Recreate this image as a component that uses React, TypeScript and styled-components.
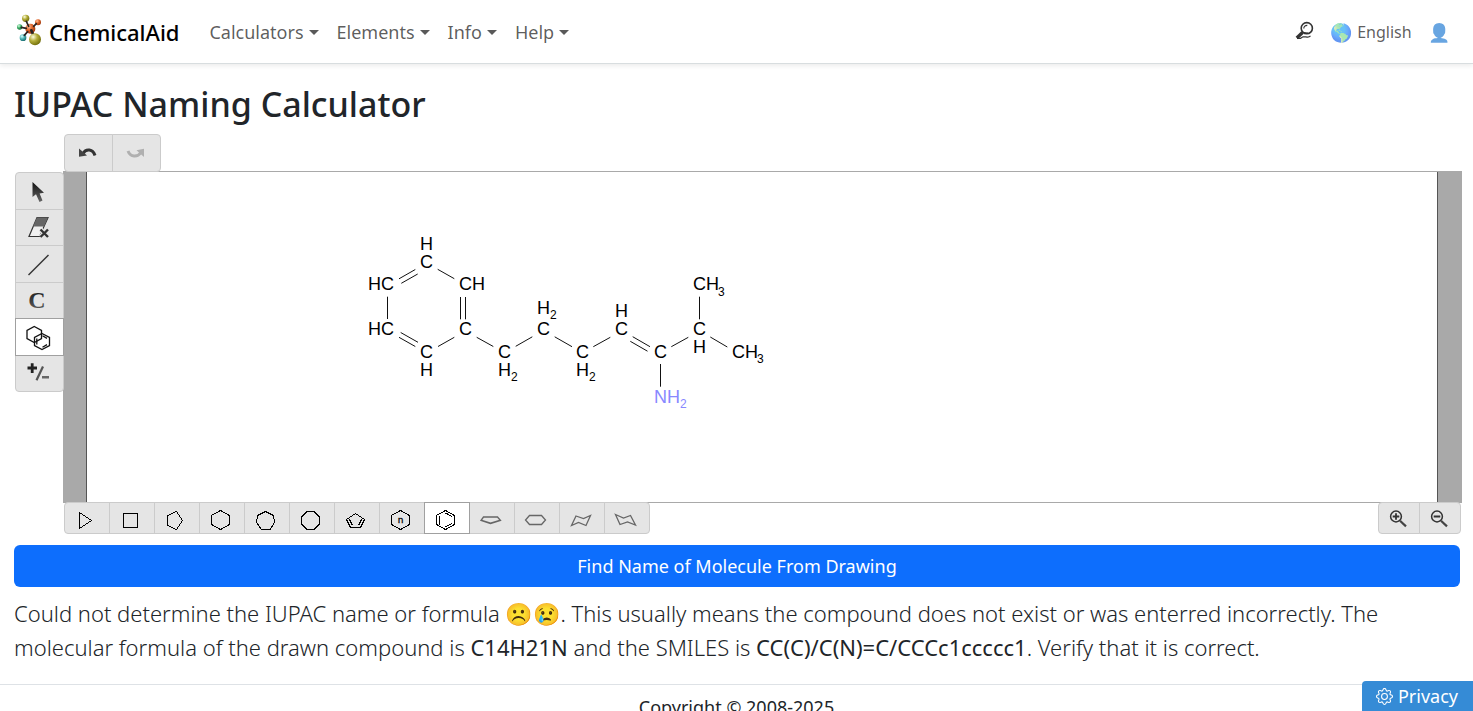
import React from "react";
import styled, { createGlobalStyle } from "styled-components";
import { BsGear } from "react-icons/bs";

const GlobalStyle = createGlobalStyle`
  *, *::before, *::after { box-sizing: border-box; }
  html { scrollbar-width: none; }
  body {
    margin: 0;
    background: #fff;
    color: #212529;
    font-family: "Noto Sans", "Noto Color Emoji", sans-serif;
    font-size: 18px;
    line-height: 27px;
  }
`;

const NavBar = styled.nav`
  display: flex;
  align-items: center;
  min-height: 64px;
  padding: 0 22px 0 16px;
  border-bottom: 1px solid #d8dddf;
  box-shadow: 0 2px 5px rgba(0, 0, 0, 0.08);
`;

const Brand = styled.a`
  display: flex;
  align-items: center;
  gap: 6px;
  margin-right: 21px;
  padding-bottom: 4px;
  color: #000;
  font-size: 22px;
  font-weight: 500;
  text-decoration: none;

  span { padding-top: 6px; }
`;

const NavList = styled.ul`
  display: flex;
  flex: 1;
  margin: 0;
  padding: 2px 0 0;
  list-style: none;
`;

const NavLink = styled.a`
  display: flex;
  align-items: center;
  gap: 5px;
  padding: 0 9px;
  color: rgba(0, 0, 0, 0.65);
  text-decoration: none;

  &::after {
    content: "";
    border-top: 5px solid;
    border-right: 5px solid transparent;
    border-left: 5px solid transparent;
  }
`;

const NavTools = styled.div`
  display: flex;
  align-items: center;
  gap: 17px;
  padding-top: 2px;
`;

const ToolLink = styled.a`
  display: flex;
  align-items: center;
  gap: 4px;
  color: rgba(0, 0, 0, 0.65);
  font-size: 16px;
  text-decoration: none;

  svg { margin-bottom: 4px; }
`;

const Emoji = styled.span`
  font-size: 18px;
`;

const Main = styled.main`
  padding: 0 13px 0 14px;
`;

const Title = styled.h1`
  margin: 0;
  padding: 18px 0 8px;
  font-size: 34px;
  font-weight: 500;
  line-height: 44px;
`;

const Editor = styled.section`
  display: grid;
  grid-template-columns: 49px minmax(0, 1fr);
  grid-template-rows: 37px 332px 31px;
  margin-right: -2px;
`;

const TopBar = styled.div`
  grid-column: 2;
  display: flex;
  height: 38px;
  padding-left: 1px;
`;

const SideBar = styled.div`
  display: grid;
  grid-template-rows: 37px 36px 37px 36px 37px 37px;
  align-self: start;
  width: 49px;
  margin: 1px 0 0 1px;
`;

const BottomBar = styled.div`
  grid-column: 2;
  display: flex;
  justify-content: space-between;
  margin-top: -1px;
  padding: 0 1px;
  z-index: 1;
`;

const ButtonGroup = styled.div`
  display: flex;

  > button + button { margin-left: -1px; }
`;

type ToolProps = { $width?: number; $on?: boolean; $side?: boolean };

const ToolButton = styled.button<ToolProps>`
  display: block;
  width: ${(p) => p.$width ?? 46}px;
  margin: ${(p) => (p.$side ? "0 0 -1px" : "0")};
  padding: 0;
  overflow: hidden;
  border: 1px solid ${(p) => (p.$on ? "#a0a0a0" : "#cbcbcb")};
  background: ${(p) => (p.$on ? "#fff" : "#e5e5e5")};
  z-index: ${(p) => (p.$on ? 1 : 0)};

  &:first-child { border-radius: ${(p) => (p.$side ? "4px 4px 0 0" : "4px 0 0 4px")}; }
  &:last-child {
    margin-bottom: 0;
    border-radius: ${(p) => (p.$side ? "0 0 4px 4px" : "0 4px 4px 0")};
  }
  svg { display: block; }
`;

const Canvas = styled.div`
  display: flex;
  padding: 0 24px 0 23px;
  border: solid #a9a9a9;
  border-width: 1px 0;
  background: #a9a9a9;
`;

const Paper = styled.div`
  flex: 1;
  min-width: 0;
  overflow: hidden;
  border: solid #555;
  border-width: 0 1px;
  background: #fff;

  svg { display: block; }
  text { font: 18px "Liberation Sans", sans-serif; }
  .sub { font-size: 12px; }
`;

const FindButton = styled.button`
  display: block;
  width: 100%;
  height: 42px;
  margin-top: 11px;
  border: 0;
  border-radius: 6px;
  background: #0d6efd;
  color: #fff;
  font: 18px/27px "Noto Sans", sans-serif;
`;

const Result = styled.p`
  margin: 9px 0 20px;
  font-size: 22px;
  font-weight: 300;
  line-height: 34px;

  strong { font-weight: 400; }
`;

const Faces = styled.span`
  font-family: "Noto Color Emoji", sans-serif;
  line-height: 1;
`;

const Footer = styled.footer`
  padding: 9px 0;
  border-top: 1px solid #dee2e6;
  text-align: center;
`;

const PrivacyButton = styled.button`
  position: fixed;
  right: 0;
  bottom: 0;
  display: flex;
  align-items: center;
  gap: 5px;
  height: 30px;
  padding: 0 15px 0 14px;
  border: 0;
  border-radius: 4px 0 0 0;
  background: #358bd6;
  color: #fff;
  font: 18px/27px "Noto Sans", sans-serif;
`;

const Logo = () => (
  <svg width="27" height="32" viewBox="48 42 81 96" aria-hidden="true">
    <defs>
      <radialGradient id="lime" cx="35%" cy="30%" r="75%">
        <stop offset="0" stopColor="#fdfde0" />
        <stop offset="0.45" stopColor="#b4ae3a" />
        <stop offset="1" stopColor="#6d6a08" />
      </radialGradient>
      <radialGradient id="orange" cx="35%" cy="30%" r="75%">
        <stop offset="0" stopColor="#ffc09a" />
        <stop offset="0.45" stopColor="#e0672c" />
        <stop offset="1" stopColor="#9a3407" />
      </radialGradient>
      <radialGradient id="green" cx="35%" cy="30%" r="75%">
        <stop offset="0" stopColor="#d4ffe0" />
        <stop offset="0.5" stopColor="#3fae68" />
        <stop offset="1" stopColor="#146b35" />
      </radialGradient>
      <radialGradient id="teal" cx="35%" cy="30%" r="75%">
        <stop offset="0" stopColor="#d8ffff" />
        <stop offset="0.5" stopColor="#4cb3b3" />
        <stop offset="1" stopColor="#14686c" />
      </radialGradient>
    </defs>
    <circle cx="59" cy="81" r="8" fill="url(#green)" />
    <circle cx="114" cy="67" r="9" fill="url(#orange)" />
    <circle cx="69" cy="113" r="10" fill="url(#teal)" />
    <circle cx="77" cy="55" r="11" fill="url(#lime)" />
    <circle cx="91" cy="86" r="15" fill="url(#orange)" />
    <g stroke="#2b2422" strokeWidth="5" strokeLinecap="round">
      <path d="M79 64 86 79M64 82 79 85M109 71 101 79M73 106 83 95" />
      <path d="M94 91 99 103" strokeWidth="8" />
    </g>
    <circle cx="105" cy="118" r="18" fill="url(#lime)" />
  </svg>
);

const SearchIcon = () => (
  <svg width="19" height="20" viewBox="0 0 19 20" fill="none" stroke="#333" aria-hidden="true">
    <circle cx="11.8" cy="7.2" r="5.6" strokeWidth="1.6" />
    <path d="M8.8 7.5c0-2 1.5-3.3 3.5-3.2" strokeWidth="1.2" />
    <path d="m7.5 11.5-5.7 5.4" strokeWidth="3.4" />
    <path d="M2 17.3h3.5l2.5-1.5h3q3 .8 4.5-1M7.5 11.5l5.5.5" strokeWidth="1.2" />
  </svg>
);

const HEXAGON = "M20.5 7.5 29.5 12.5V21.5L20.5 26.5 11.5 21.5V12.5Z";

const rings: { name: string; path: string; soft?: boolean; label?: string; on?: boolean }[] = [
  { name: "Cyclopropane", path: "M14.5 9.5V25.5L26.5 17.5Z" },
  { name: "Cyclobutane", path: "M13.5 10.5H27.5V24.5H13.5Z" },
  { name: "Cyclopentane", path: "M12.5 12.5V22.5L21.5 26.5 27.5 17.5 21.5 8.5Z" },
  { name: "Cyclohexane", path: HEXAGON },
  { name: "Cycloheptane", path: "M20.5 8.5 28.5 12.5 29.5 19.5 25 26.5H16.5L11.5 19.5 12.5 12.5Z" },
  { name: "Cyclooctane", path: "M17 8.5H24L29.5 14V21L24 26.5H17L11.5 21V14Z" },
  { name: "Cyclopentadiene", path: "M20.5 10.5 29.5 16.5 25.5 24.5H15.5L11.5 16.5ZM14.5 16.5 17.5 22.5M26.5 16.5 23.5 22.5" },
  { name: "Ring of n atoms", path: HEXAGON, label: "n" },
  { name: "Benzene", path: HEXAGON + "M14.5 13V21.5M20.5 10 27 13.5M27 20.5 20.5 24", on: true },
  { name: "Cyclopentane envelope", path: "M13.5 14H27.5L30.5 17.5 20.5 20.5 11 17.5ZM11 17 20.5 20 30.5 17", soft: true },
  { name: "Flat cyclohexane", path: "M14.5 12.5H26.5L30.5 17 26.5 21.5H14.5L10.5 17Z", soft: true },
  { name: "Chair left", path: "M16 13 23.5 15.5 30.5 12.5 26 22.5 18.5 19.5 11.5 22.5Z", soft: true },
  { name: "Chair right", path: "M10.5 11.5 18.5 15 25.5 12.5 30.5 22 22.5 19 15 21.5Z", soft: true },
];

const RingIcon = ({ path, soft, label }: { path: string; soft?: boolean; label?: string }) => (
  <svg width="44" height="30" fill="none" aria-hidden="true">
    <path d={path} stroke={soft ? "#666" : "#000"} strokeWidth={soft ? 1.3 : 1} shapeRendering={soft ? "auto" : "crispEdges"} />
    {label && (
      <text x="20.5" y="20" textAnchor="middle" fill="#000" stroke="#000" strokeWidth="0.3" fontFamily="DejaVu Sans, sans-serif" fontSize="9">
        {label}
      </text>
    )}
  </svg>
);

const sideTools: { name: string; on?: boolean; icon: React.ReactNode }[] = [
  { name: "Select", icon: <path d="M16.5 8V23L20 20.3 23.5 28 26.5 26.6 23.6 19.6 28 18.7Z" fill="url(#ink)" /> },
  {
    name: "Erase",
    icon: (
      <>
        <path d="M21 7.5H32L23.5 26.5H13Z" fill="#f0f0f0" stroke="#333" strokeWidth="1.2" />
        <path d="M21 7.5H32L28 16.5H17Z" fill="#666" />
        <path d="m24.5 19.5 7.5 7.5m0-7.5-7.5 7.5" stroke="#e5e5e5" strokeWidth="5" />
        <path d="m24.5 19.5 7.5 7.5m0-7.5-7.5 7.5" stroke="#333" strokeWidth="2.4" />
      </>
    ),
  },
  { name: "Bond", icon: <path d="M12.5 28 32.5 8" stroke="#333" strokeWidth="1.5" /> },
  {
    name: "Atom",
    icon: (
      <text x="21" y="25" textAnchor="middle" fill="url(#ink)" fontFamily="Liberation Serif, serif" fontSize="24" fontWeight="bold">
        C
      </text>
    ),
  },
  {
    name: "Ring",
    on: true,
    icon: (
      <g stroke="#111" strokeWidth="1.3">
        <path d="M18.3 6.5 25.5 10.5V18.5L18.3 22.5 11 18.5V10.5Z" />
        <path d="M26 13.5 33.5 17.5V25.5L26 29.5 18.5 25.5V17.5Z" />
        <path d="M20.8 18.5V24.5M26.5 15.8 31 18.4M31 24.6 26.5 27.2" />
      </g>
    ),
  },
  {
    name: "Charge",
    icon: (
      <>
        <path d="M11.5 12H21M16.2 7.3V17" stroke="#222" strokeWidth="2.8" />
        <path d="M20.5 24.3 27 10.5" stroke="#555" strokeWidth="2.2" />
        <path d="M26 21.3H33" stroke="#666" strokeWidth="2.4" />
      </>
    ),
  },
];

const ZoomIcon = ({ plus }: { plus?: boolean }) => (
  <svg width="40" height="30" fill="none" stroke="#333" aria-hidden="true">
    <circle cx="17" cy="13.5" r="5.4" strokeWidth="1.5" />
    <path d="m21 17.7 6 5.7" stroke="#444" strokeWidth="2.2" />
    <path d={plus ? "M13.7 13.5H20.3M17 10.2V16.8" : "M13.7 13.5H20.3"} strokeWidth="1.8" />
  </svg>
);

// Bond segments as x1, y1, x2, y2 on the drawing surface.
const bonds = [
  [350.7, 97.3, 367.3, 106.7],
  [312, 106.8, 328.3, 97.5], [314.3, 111.3, 330.7, 102],
  [300.5, 124.7, 300.5, 147],
  [313.7, 160.5, 331, 170.3], [312, 165.3, 328.3, 174.5],
  [351, 174.5, 367.3, 165.3],
  [373.5, 125, 373.5, 147.3], [378.5, 125, 378.5, 147.3],
  [389.7, 165.3, 406.3, 174.5],
  [428.7, 174.3, 445.3, 164.8],
  [467.7, 164.8, 485, 174.7],
  [506.3, 174.7, 523.3, 165.3],
  [545.7, 164.7, 563, 174.7], [543.3, 169.3, 560.5, 179.2],
  [584.3, 174.7, 601.3, 165.3],
  [612.5, 124.7, 612.5, 147.3],
  [623.3, 165, 640.3, 175],
  [573.5, 192, 573.5, 214.7],
];

// Atom labels as text, left edge, baseline.
const atoms: [string, number, number][] = [
  ["H", 333, 78], ["C", 333, 96],
  ["HC", 281, 118], ["HC", 281, 163],
  ["CH", 372, 118], ["C", 372, 163],
  ["C", 333, 186], ["H", 333, 204],
  ["C", 411, 186], ["H", 411, 204],
  ["H", 450, 142], ["C", 450, 163],
  ["C", 489, 186], ["H", 489, 204],
  ["H", 528, 145], ["C", 528, 163],
  ["C", 567, 186],
  ["C", 606, 163], ["H", 606, 181],
  ["CH", 606, 118], ["CH", 645, 186],
];

const subs: [string, number, number][] = [
  ["2", 424, 209], ["2", 463, 147], ["2", 502, 209], ["3", 631, 124], ["3", 670, 191],
];

const Molecule = () => (
  <svg width="720" height="330" role="img" aria-label="Molecule drawing">
    <g stroke="#111" strokeWidth="1">
      {bonds.map(([x1, y1, x2, y2], i) => (
        <line key={i} x1={x1} y1={y1} x2={x2} y2={y2} />
      ))}
    </g>
    {atoms.map(([t, x, y], i) => (
      <text key={i} x={x} y={y}>{t}</text>
    ))}
    {subs.map(([t, x, y], i) => (
      <text key={i} className="sub" x={x} y={y}>{t}</text>
    ))}
    <g fill="#8888ff">
      <text x="567" y="231">NH</text>
      <text className="sub" x="593" y="236">2</text>
    </g>
  </svg>
);

export default function App() {
  return (
    <>
      <GlobalStyle />
      <NavBar>
        <Brand href="#">
          <Logo />
          <span>ChemicalAid</span>
        </Brand>
        <NavList>
          {["Calculators", "Elements", "Info", "Help"].map((item) => (
            <li key={item}>
              <NavLink href="#">{item}</NavLink>
            </li>
          ))}
        </NavList>
        <NavTools>
          <ToolLink href="#" aria-label="Search">
            <SearchIcon />
          </ToolLink>
          <ToolLink href="#">
            <Emoji>🌎</Emoji>
            <span>English</span>
          </ToolLink>
          <ToolLink href="#" aria-label="Account">
            <Emoji>👤</Emoji>
          </ToolLink>
        </NavTools>
      </NavBar>
      <Main>
        <Title>IUPAC Naming Calculator</Title>
        <Editor>
          <TopBar>
            <ButtonGroup>
              <ToolButton type="button" aria-label="Undo" $width={49}>
                <svg width="47" height="36" fill="none" aria-hidden="true">
                  <path d="M18 18.5C21 13 28 14 30 20.5" stroke="#333" strokeWidth="3" />
                  <path d="M14 13.5V21.8L22 20.4Z" fill="#444" />
                </svg>
              </ToolButton>
              <ToolButton type="button" aria-label="Redo" $width={49} disabled>
                <svg width="47" height="36" fill="none" aria-hidden="true">
                  <path d="M15 16C17.5 22.5 24.5 22.5 28 17.5" stroke="#b0b0b0" strokeWidth="3" />
                  <path d="M23.5 15.2 31 13.7V22Z" fill="#b0b0b0" />
                </svg>
              </ToolButton>
            </ButtonGroup>
          </TopBar>
          <SideBar>
            {sideTools.map((tool) => (
              <ToolButton key={tool.name} type="button" aria-label={tool.name} $width={49} $on={tool.on} $side>
                <svg width="47" height="35" fill="none" aria-hidden="true">
                  <defs>
                    <linearGradient id="ink" x1="0" y1="0" x2="0" y2="1">
                      <stop offset="0" stopColor="#111" />
                      <stop offset="1" stopColor="#666" />
                    </linearGradient>
                  </defs>
                  {tool.icon}
                </svg>
              </ToolButton>
            ))}
          </SideBar>
          <Canvas>
            <Paper>
              <Molecule />
            </Paper>
          </Canvas>
          <BottomBar>
            <ButtonGroup>
              {rings.map((ring) => (
                <ToolButton key={ring.name} type="button" aria-label={ring.name} $on={ring.on}>
                  <RingIcon path={ring.path} soft={ring.soft} label={ring.label} />
                </ToolButton>
              ))}
            </ButtonGroup>
            <ButtonGroup>
              <ToolButton type="button" aria-label="Zoom in" $width={42}>
                <ZoomIcon plus />
              </ToolButton>
              <ToolButton type="button" aria-label="Zoom out" $width={42}>
                <ZoomIcon />
              </ToolButton>
            </ButtonGroup>
          </BottomBar>
        </Editor>
        <FindButton type="button">Find Name of Molecule From Drawing</FindButton>
        <Result>
          Could not determine the IUPAC name or formula <Faces>☹️😢</Faces>. This usually means the compound does not
          exist or was enterred incorrectly. The molecular formula of the drawn compound is <strong>C14H21N</strong> and
          the SMILES is <strong>CC(C)/C(N)=C/CCCc1ccccc1</strong>. Verify that it is correct.
        </Result>
      </Main>
      <Footer>Copyright © 2008-2025</Footer>
      <PrivacyButton type="button">
        <BsGear size={17} />
        Privacy
      </PrivacyButton>
    </>
  );
}
